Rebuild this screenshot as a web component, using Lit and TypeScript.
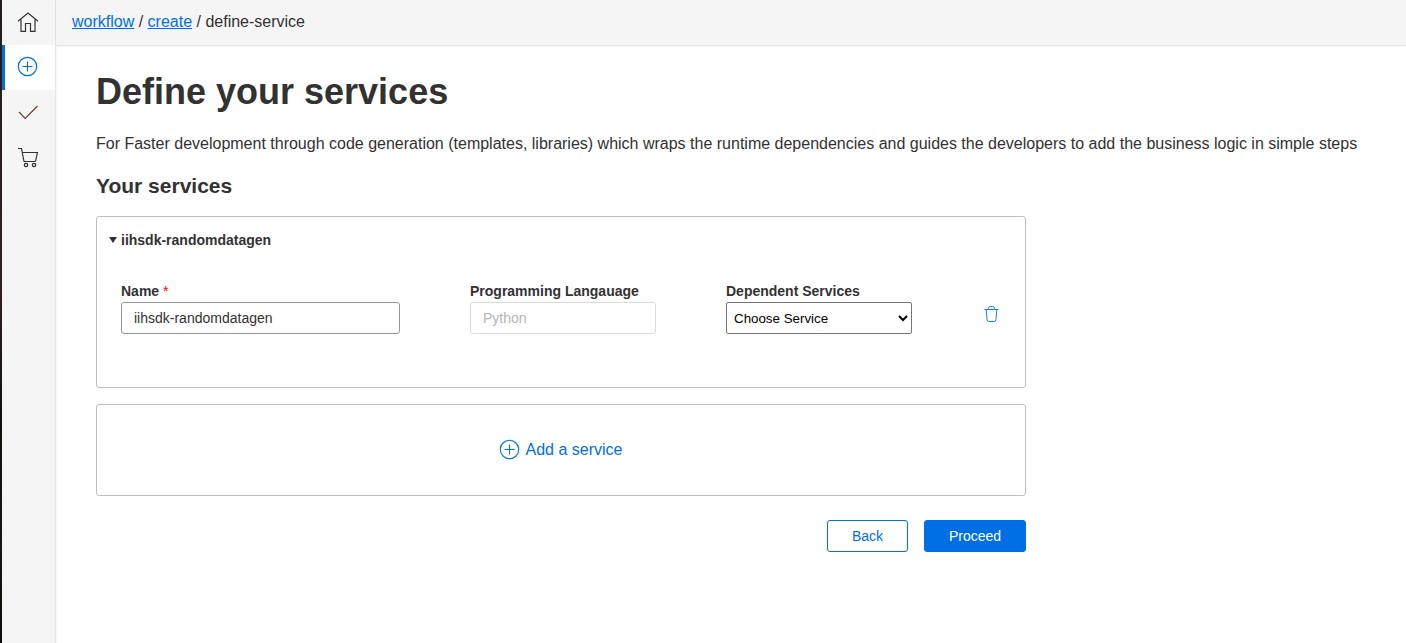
import { LitElement, html, svg, css } from "lit";
import { customElement, property } from "lit/decorators.js";

const shapes: Record<string, unknown> = {
  home: svg`<path d="M1 9.200 11 1l10 8.200M4 7.500V19.400h4.500v-7.900h5v7.900H18V7.500"/>`,
  plus: svg`<circle cx="10.500" cy="10.500" r="9.200"/><path d="M10.500 5.500v10M5.500 10.500h10"/>`,
  check: svg`<path d="M2 10 8.200 16.500 20.500 4"/>`,
  cart: svg`<path d="M1 1.500h3.500l2.500 13h11.500M5.200 5.500h15.200l-1.900 9"/><circle cx="9" cy="18" r="1.700"/><circle cx="17" cy="18" r="1.700"/>`,
  trash: svg`<path d="M.5 4.500h14M2.200 4.500l.8 10q.1 2 1.800 2h5.400q1.700 0 1.800-2l.8-10M4.500 4V3.500q0-2 2-2h2q2 0 2 2V4"/>`,
};

@customElement("line-icon")
class LineIcon extends LitElement {
  @property() name = "home";
  @property() box = "0 0 22 22";
  static styles = css`
    :host { display: block; width: 22px; height: 22px; }
    svg { display: block; width: 100%; height: 100%; fill: none; stroke: currentColor; stroke-width: var(--line, 1.2); }
  `;
  render() {
    return html`<svg viewBox=${this.box}>${shapes[this.name]}</svg>`;
  }
}

@customElement("app-root")
class AppRoot extends LitElement {
  static styles = css`
    :host {
      display: flex; height: 643px; overflow: hidden; background: #fff; color: #323232;
      font-family: "Liberation Sans", Arial, sans-serif; font-size: 16px;
    }
    * { box-sizing: border-box; }
    .edge { width: 2px; flex: none; background: linear-gradient(#231c1b, #30211e 45%, #12100f 65%, #1b1411 85%, #0c0c0c); }
    .side { width: 54px; flex: none; background: #f5f5f5; border-right: 1px solid #e6e6e6; box-shadow: 1px 0 2px #0000000a; }
    .item { height: 45px; padding: 12px 0 0 15px; }
    .item.active { background: #fff; border-left: 3px solid #006fe6; padding: 11px 0 0 12px; color: #006fe6; }
    .item.done { color: #643f35; }
    .item .round { width: 21px; height: 21px; }
    .main { flex: 1; min-width: 0; }
    .crumbs {
      height: 46px; padding: 12px 16px 0; line-height: 19px; background: #f5f5f5;
      border-bottom: 1px solid #e6e6e6; box-shadow: 0 1px 2px #0000000a;
    }
    a { color: #006fe6; text-decoration: underline; }
    .page { padding: 0 40px; }
    h1 { margin: 25px 0 0; font-size: 36px; line-height: 42px; }
    p { margin: 21px 0 0; line-height: 20px; white-space: nowrap; }
    h2 { margin: 20px 0 0; font-size: 21px; line-height: 24px; }
    .column { width: 930px; }
    .card { height: 172px; margin-top: 18px; border: 1px solid #bebebe; border-radius: 3px; padding: 15px 24px 0; }
    .title { display: flex; align-items: center; gap: 4px; margin-left: -12px; font-size: 14px; line-height: 16px; font-weight: bold; }
    .title svg { width: 8px; height: 6px; fill: currentColor; }
    .fields { display: flex; align-items: flex-start; margin-top: 35px; }
    .field { display: flex; flex-direction: column; gap: 3px; width: 186px; margin-right: 70px; font-size: 14px; }
    .field.wide { width: 279px; }
    label { line-height: 16px; font-weight: bold; white-space: nowrap; }
    .star { color: #f00; font-weight: normal; }
    input {
      height: 32px; width: 100%; margin: 0; padding: 0 12px; border: 1px solid #969696; border-radius: 3px;
      background: #fff; color: #323232; font: 14px "Liberation Sans", Arial, sans-serif;
    }
    input:disabled { border-color: #dcdcdc; color: #b4b4b4; }
    select {
      height: 32px; width: 100%; margin: 0; padding: 0 3px; border: 1px solid #767676; border-radius: 2px;
      background: #fff; color: #000; font: 13.333px "Liberation Sans", Arial, sans-serif;
    }
    .trash { width: 16px; height: 17px; margin: 22px 0 0 2px; color: #006fe6; --line: 0.9; }
    .add {
      height: 92px; margin-top: 16px; border: 1px solid #bebebe; border-radius: 3px; padding-right: 1px;
      display: flex; align-items: center; justify-content: center; gap: 6px; color: #006fe6;
    }
    .add line-icon { width: 21px; height: 21px; margin-bottom: 2px; --line: 1.1; }
    .actions { display: flex; justify-content: flex-end; gap: 16px; margin-top: 24px; }
    button {
      width: 81px; height: 32px; padding: 0; border: 1px solid #006fe6; border-radius: 3px;
      background: #fff; color: #006fe6; font: 14px "Liberation Sans", Arial, sans-serif;
    }
    .primary { width: 102px; background: #006fe6; color: #fff; }
  `;

  render() {
    return html`
      <div class="edge"></div>
      <nav class="side">
        <div class="item"><line-icon name="home"></line-icon></div>
        <div class="item active"><line-icon class="round" name="plus" box="0 0 21 21"></line-icon></div>
        <div class="item done"><line-icon name="check"></line-icon></div>
        <div class="item"><line-icon name="cart"></line-icon></div>
      </nav>
      <div class="main">
        <header class="crumbs"><a href="#">workflow</a> / <a href="#">create</a> / define-service</header>
        <main class="page">
          <h1>Define your services</h1>
          <p>For Faster development through code generation (templates, libraries) which wraps the runtime dependencies and guides the developers to add the business logic in simple steps</p>
          <div class="column">
            <h2>Your services</h2>
            <section class="card">
              <div class="title"><svg viewBox="0 0 8 6"><path d="M0 0h8L4 6z" /></svg>iihsdk-randomdatagen</div>
              <div class="fields">
                <div class="field wide"><label>Name <span class="star">*</span></label><input .value=${"iihsdk-randomdatagen"} /></div>
                <div class="field"><label>Programming Langauage</label><input disabled .value=${"Python"} /></div>
                <div class="field"><label>Dependent Services</label><select><option>Choose Service</option></select></div>
                <line-icon class="trash" name="trash" box="0 0 16 17"></line-icon>
              </div>
            </section>
            <section class="add"><line-icon name="plus" box="0 0 21 21"></line-icon>Add a service</section>
            <div class="actions"><button>Back</button><button class="primary">Proceed</button></div>
          </div>
        </main>
      </div>
    `;
  }
}
